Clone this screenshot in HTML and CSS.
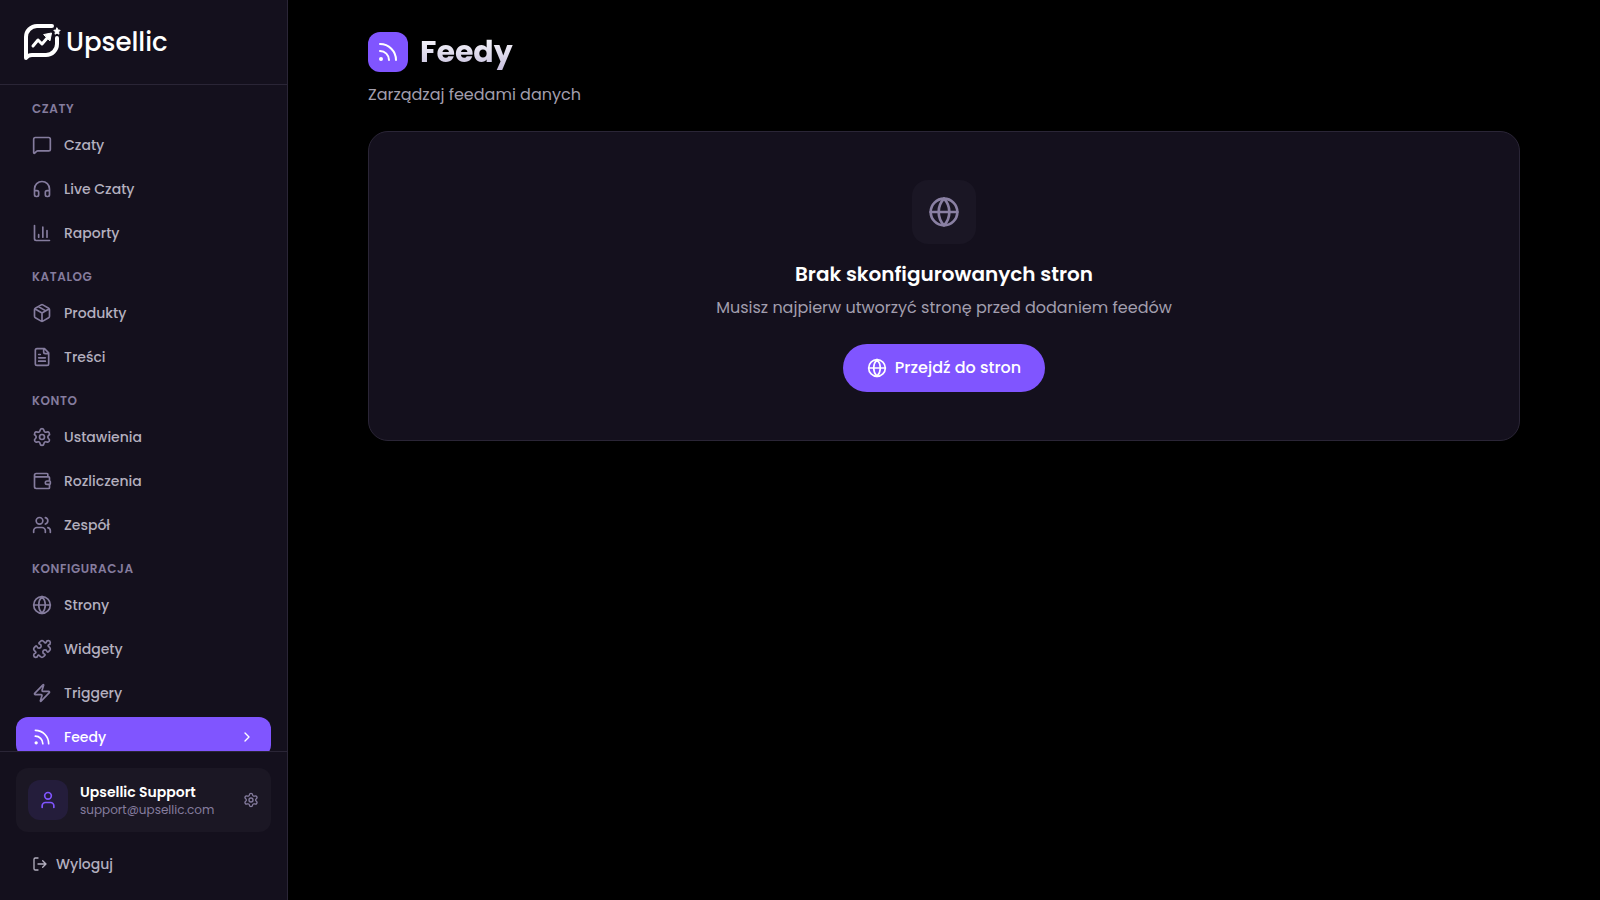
FILE: index.html
```html
<!doctype html>
<html lang="pl">
<head>
    <meta charset="UTF-8">
    <meta name="viewport" content="width=device-width, initial-scale=1.0">
    <title>Feedy</title>
    <link rel="stylesheet" href="styles.css">
</head>
<body>
<!-- icons used more than once -->
<svg class="sprite" aria-hidden="true">
    <symbol id="globe" viewBox="0 0 24 24"><circle cx="12" cy="12" r="10"/><path d="M12 2a14.5 14.5 0 0 0 0 20 14.5 14.5 0 0 0 0-20M2 12h20"/></symbol>
    <symbol id="rss" viewBox="0 0 24 24"><path d="M4 11a9 9 0 0 1 9 9M4 4a16 16 0 0 1 16 16"/><circle cx="5" cy="19" r="1"/></symbol>
    <symbol id="gear" viewBox="0 0 24 24"><path d="M9.671 4.136a2.34 2.34 0 0 1 4.659 0 2.34 2.34 0 0 0 3.319 1.915 2.34 2.34 0 0 1 2.33 4.033 2.34 2.34 0 0 0 0 3.831 2.34 2.34 0 0 1-2.33 4.033 2.34 2.34 0 0 0-3.319 1.915 2.34 2.34 0 0 1-4.659 0 2.34 2.34 0 0 0-3.32-1.915 2.34 2.34 0 0 1-2.33-4.033 2.34 2.34 0 0 0 0-3.831A2.34 2.34 0 0 1 6.35 6.051a2.34 2.34 0 0 0 3.319-1.915"/><circle cx="12" cy="12" r="3"/></symbol>
</svg>

<div class="layout">
    <aside class="sidebar">
        <a class="logo" href="#">
            <svg class="logo-mark" viewBox="0 0 36 36" aria-hidden="true">
                <path class="bubble" d="M28 2H13A11 11 0 0 0 2 13V34Q4 31 8 31H22A11 11 0 0 0 33 20V14"/>
                <path class="trend" d="M9 22l5-6 4 4 6-7"/>
                <path class="solid" d="M20 10.500L27.500 9 26 16.500z"/>
                <path class="solid" d="M33 4l1 2 2.200.3-1.600 1.600.4 2.300-2-1.100-2 1.100.4-2.300-1.600-1.600L32 6z"/>
            </svg>
            <span>Upsellic</span>
        </a>

        <nav class="menu">
            <section>
                <h2>Czaty</h2>
                <ul>
                    <li><a href="#"><svg class="icon" viewBox="0 0 24 24"><path d="M22 17a2 2 0 0 1-2 2H6.828a2 2 0 0 0-1.414.586l-2.202 2.202A.71.71 0 0 1 2 21.286V5a2 2 0 0 1 2-2h16a2 2 0 0 1 2 2z"/></svg>Czaty</a></li>
                    <li><a href="#"><svg class="icon" viewBox="0 0 24 24"><path d="M3 14h3a2 2 0 0 1 2 2v3a2 2 0 0 1-2 2H5a2 2 0 0 1-2-2v-7a9 9 0 0 1 18 0v7a2 2 0 0 1-2 2h-1a2 2 0 0 1-2-2v-3a2 2 0 0 1 2-2h3"/></svg>Live Czaty</a></li>
                    <li><a href="#"><svg class="icon" viewBox="0 0 24 24"><path d="M3 3v16a2 2 0 0 0 2 2h16M18 17V9M13 17V5M8 17v-3"/></svg>Raporty</a></li>
                </ul>
            </section>
            <section>
                <h2>Katalog</h2>
                <ul>
                    <li><a href="#"><svg class="icon" viewBox="0 0 24 24"><path d="M11 21.730a2 2 0 0 0 2 0l7-4A2 2 0 0 0 21 16V8a2 2 0 0 0-1-1.730l-7-4a2 2 0 0 0-2 0l-7 4A2 2 0 0 0 3 8v8a2 2 0 0 0 1 1.730zM12 22V12M3.300 7l8.700 5 8.700-5M7.500 4.270l9 5.150"/></svg>Produkty</a></li>
                    <li><a href="#"><svg class="icon" viewBox="0 0 24 24"><path d="M15 2H6a2 2 0 0 0-2 2v16a2 2 0 0 0 2 2h12a2 2 0 0 0 2-2V7zM14 2v4a2 2 0 0 0 2 2h4M10 9H8M16 13H8M16 17H8"/></svg>Treści</a></li>
                </ul>
            </section>
            <section>
                <h2>Konto</h2>
                <ul>
                    <li><a href="#"><svg class="icon"><use href="#gear"/></svg>Ustawienia</a></li>
                    <li><a href="#"><svg class="icon" viewBox="0 0 24 24"><path d="M19 7V4a1 1 0 0 0-1-1H5a2 2 0 0 0 0 4h15a1 1 0 0 1 1 1v4h-3a2 2 0 0 0 0 4h3a1 1 0 0 0 1-1v-2a1 1 0 0 0-1-1M3 5v14a2 2 0 0 0 2 2h15a1 1 0 0 0 1-1v-4"/></svg>Rozliczenia</a></li>
                    <li><a href="#"><svg class="icon" viewBox="0 0 24 24"><path d="M16 21v-2a4 4 0 0 0-4-4H6a4 4 0 0 0-4 4v2M16 3.128a4 4 0 0 1 0 7.744M22 21v-2a4 4 0 0 0-3-3.870"/><circle cx="9" cy="7" r="4"/></svg>Zespół</a></li>
                </ul>
            </section>
            <section>
                <h2>Konfiguracja</h2>
                <ul>
                    <li><a href="#"><svg class="icon"><use href="#globe"/></svg>Strony</a></li>
                    <li><a href="#"><svg class="icon" viewBox="0 0 24 24"><path d="M15.390 4.390a1 1 0 0 0 1.680-.474 2.500 2.500 0 1 1 3.014 3.015 1 1 0 0 0-.474 1.680l1.683 1.682a2.414 2.414 0 0 1 0 3.414L19.610 15.390a1 1 0 0 1-1.680-.474 2.500 2.500 0 1 0-3.014 3.015 1 1 0 0 1 .474 1.680l-1.683 1.682a2.414 2.414 0 0 1-3.414 0L8.610 19.610a1 1 0 0 0-1.680.474 2.500 2.500 0 1 1-3.014-3.015 1 1 0 0 0 .474-1.680l-1.683-1.682a2.414 2.414 0 0 1 0-3.414L4.390 8.610a1 1 0 0 1 1.680.474 2.500 2.500 0 1 0 3.014-3.015 1 1 0 0 1-.474-1.680l1.683-1.682a2.414 2.414 0 0 1 3.414 0z"/></svg>Widgety</a></li>
                    <li><a href="#"><svg class="icon" viewBox="0 0 24 24"><path d="M4 14a1 1 0 0 1-.780-1.630l9.900-10.200a.5.5 0 0 1 .860.460l-1.920 6.020A1 1 0 0 0 13 10h7a1 1 0 0 1 .780 1.630l-9.900 10.200a.5.5 0 0 1-.860-.460l1.920-6.020A1 1 0 0 0 11 14z"/></svg>Triggery</a></li>
                    <li><a class="active" href="#" aria-current="page"><svg class="icon"><use href="#rss"/></svg>Feedy<svg class="icon icon-small arrow" viewBox="0 0 24 24"><path d="M9 18l6-6-6-6"/></svg></a></li>
                </ul>
            </section>
        </nav>

        <div class="account">
            <a class="profile" href="#">
                <span class="avatar"><svg class="icon" viewBox="0 0 24 24"><path d="M19 21v-2a4 4 0 0 0-4-4H9a4 4 0 0 0-4 4v2"/><circle cx="12" cy="7" r="4"/></svg></span>
                <span class="who">
                    <strong>Upsellic Support</strong>
                    <small>support@upsellic.com</small>
                </span>
                <svg class="icon icon-small"><use href="#gear"/></svg>
            </a>
            <button class="logout" type="button">
                <svg class="icon icon-small" viewBox="0 0 24 24"><path d="M16 17l5-5-5-5M21 12H9M9 21H5a2 2 0 0 1-2-2V5a2 2 0 0 1 2-2h4"/></svg>
                Wyloguj
            </button>
        </div>
    </aside>

    <main>
        <header class="page-head">
            <div class="page-title">
                <span class="badge"><svg class="icon"><use href="#rss"/></svg></span>
                <h1>Feedy</h1>
            </div>
            <p>Zarządzaj feedami danych</p>
        </header>

        <section class="empty">
            <div class="empty-icon"><svg class="icon"><use href="#globe"/></svg></div>
            <h2>Brak skonfigurowanych stron</h2>
            <p>Musisz najpierw utworzyć stronę przed dodaniem feedów</p>
            <button class="btn" type="button"><svg class="icon"><use href="#globe"/></svg>Przejdź do stron</button>
        </section>
    </main>
</div>
</body>
</html>
```
FILE: styles.css
```css
*{
    box-sizing: border-box;
    margin: 0;
    padding: 0;
}
body{
    background: #000;
    color: #fff;
    font-family: Poppins, Inter, "Noto Sans", sans-serif;
    font-size: 16px;
    line-height: 24px;
}
a{
    color: inherit;
    text-decoration: none;
}
ul{
    list-style: none;
}
button{
    border: 0;
    background: none;
    color: inherit;
    font: inherit;
    cursor: pointer;
}
.sprite{
    display: none;
}
.icon{
    flex: none;
    width: 20px;
    height: 20px;
    fill: none;
    stroke: currentColor;
    stroke-width: 2;
    stroke-linecap: round;
    stroke-linejoin: round;
}
.icon-small{
    width: 16px;
    height: 16px;
}
.layout{
    display: flex;
    height: 100vh;
}

/* sidebar */
.sidebar{
    display: flex;
    flex-direction: column;
    flex: none;
    width: 288px;
    background: #14101d;
    border-right: 1px solid #2a2536;
}
.logo{
    display: flex;
    align-items: center;
    gap: 6px;
    height: 85px;
    padding: 0 24px;
    border-bottom: 1px solid #2a2536;
    font-size: 26px;
    font-weight: 500;
}
.logo-mark{
    width: 36px;
    height: 36px;
    overflow: visible;
    fill: none;
    stroke: #fff;
    stroke-linecap: round;
    stroke-linejoin: round;
}
.bubble{
    stroke-width: 4;
}
.trend{
    stroke-width: 3;
}
.solid{
    fill: #fff;
    stroke-width: 1;
}
.menu{
    flex: 1;
    min-height: 0;
    padding: 16px;
    overflow-y: auto;
    scrollbar-width: none;
}
.menu section + section{
    margin-top: 16px;
}
.menu h2{
    margin-bottom: 8px;
    padding: 0 16px;
    color: #857c9e;
    font-size: 12px;
    font-weight: 600;
    line-height: 16px;
    letter-spacing: 0.05em;
    text-transform: uppercase;
}
.menu li + li{
    margin-top: 4px;
}
.menu a{
    display: flex;
    align-items: center;
    gap: 12px;
    height: 40px;
    padding: 0 16px;
    border-radius: 12px;
    color: #b3afbf;
    font-size: 14px;
    font-weight: 500;
}
.menu .icon{
    color: #857c9e;
}
.menu a.active{
    background: #8055ff;
    color: #fff;
}
.menu .active .icon{
    color: #fff;
}
.arrow{
    margin-left: auto;
}
.account{
    padding: 16px;
    border-top: 1px solid #2a2536;
}
.profile{
    display: flex;
    align-items: center;
    gap: 12px;
    padding: 12px;
    border-radius: 12px;
    background: #1b1724;
    color: #857c9e;
}
.avatar{
    display: flex;
    align-items: center;
    justify-content: center;
    width: 40px;
    height: 40px;
    border-radius: 12px;
    background: #241d3b;
    color: #8055ff;
}
.who{
    flex: 1;
    min-width: 0;
}
.who strong,
.who small{
    display: block;
}
.who strong{
    color: #fff;
    font-size: 14px;
    font-weight: 600;
    line-height: 20px;
}
.who small{
    font-size: 12px;
    line-height: 16px;
}
.logout{
    display: flex;
    align-items: center;
    gap: 8px;
    width: 100%;
    height: 40px;
    margin-top: 12px;
    padding: 0 16px;
    color: #b3afbf;
    font-size: 14px;
    font-weight: 500;
}

/* content */
main{
    flex: 1;
    min-width: 0;
    padding: 32px 80px;
    overflow-y: auto;
}
.page-head{
    margin-bottom: 24px;
}
.page-head p,
.empty p{
    color: #a29eae;
}
.page-title{
    display: flex;
    align-items: center;
    gap: 12px;
    margin-bottom: 11px;
}
.badge{
    display: flex;
    align-items: center;
    justify-content: center;
    width: 40px;
    height: 40px;
    border-radius: 12px;
    background: #8055ff;
}
.badge .icon{
    width: 24px;
    height: 24px;
}
h1{
    background: linear-gradient(180deg, #fff, #c4bcdc);
    -webkit-background-clip: text;
    background-clip: text;
    color: transparent;
    font-size: 30px;
    font-weight: 700;
    line-height: 40px;
}
.empty{
    display: flex;
    flex-direction: column;
    align-items: center;
    padding: 48px;
    border: 1px solid #2a2536;
    border-radius: 20px;
    background: #14101d;
    text-align: center;
}
.empty-icon{
    display: flex;
    align-items: center;
    justify-content: center;
    width: 64px;
    height: 64px;
    margin-bottom: 16px;
    border-radius: 16px;
    background: #1a1624;
    color: #8a80a3;
}
.empty-icon .icon{
    width: 32px;
    height: 32px;
}
.empty h2{
    margin-bottom: 8px;
    font-size: 20px;
    font-weight: 600;
    line-height: 28px;
}
.empty p{
    margin-bottom: 24px;
}
.btn{
    display: flex;
    align-items: center;
    gap: 8px;
    height: 48px;
    padding: 0 24px;
    border-radius: 24px;
    background: #8055ff;
    font-weight: 500;
}
```
